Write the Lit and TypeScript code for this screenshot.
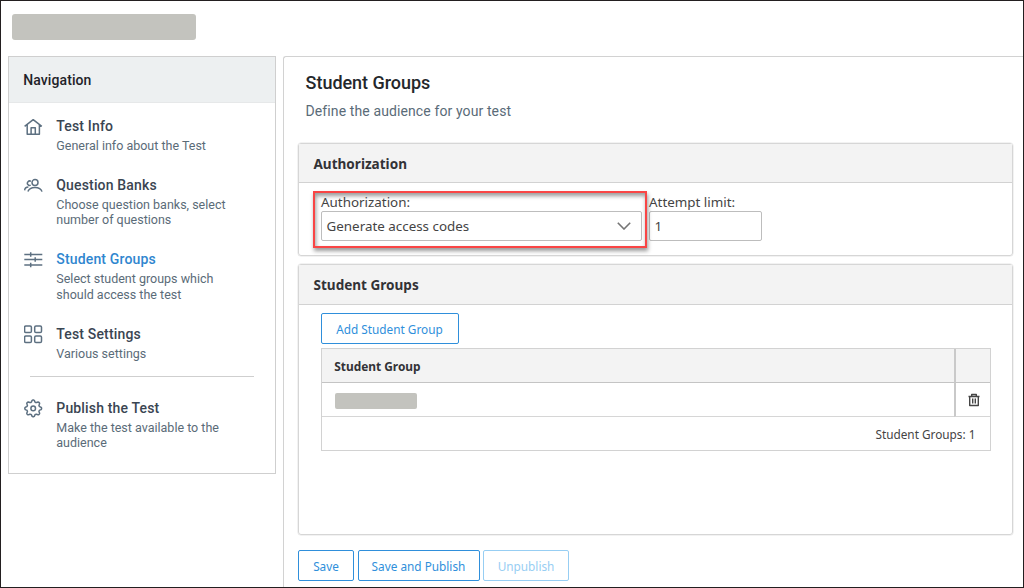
import { LitElement, html, css, svg, TemplateResult } from "lit";
import { customElement } from "lit/decorators.js";
import { classMap } from "lit/directives/class-map.js";

interface NavItem {
  icon: TemplateResult;
  title: string;
  lines: string[];
  active?: boolean;
  divided?: boolean;
}

// Outline of a cog with eight soft teeth, centred in a 19px box.
const cogOutline = (): string => {
  const pts: string[] = [];
  for (let i = 0; i < 96; i++) {
    const a = (i / 96) * Math.PI * 2;
    const r = 7.4 + Math.tanh(1.6 * Math.cos(8 * a)) * 1.05;
    pts.push(`${(9.2 + r * Math.cos(a)).toFixed(2)} ${(9.4 + r * Math.sin(a)).toFixed(2)}`);
  }
  return `M${pts.join("L")}Z`;
};

const icons = {
  home: svg`<path d="M.6 9.400 9.200 2.700 17.800 9.400M3.200 7.600v9.600h12.200V7.600M7.100 17.200v-6.400h4.200v6.400"/>`,
  people: svg`<circle cx="11" cy="6.600" r="3"/><path d="M3.900 15.600C4.900 12.500 7.600 11.400 11 11.400s6.100 1.100 7 4.200M6.900 5.400A2.200 2.200 0 1 0 6.700 9.100M.6 14.400C.8 12.200 2.100 11.100 4.400 11"/>`,
  sliders: svg`<path d="M.3 4.500h18M.3 9.500h18M.3 15h18M6.700 2.200v4.600M11.200 7.200v4.600M6.700 12.700v4.600"/>`,
  grid: svg`<rect x=".6" y=".9" width="6.800" height="6.600" rx="1.300"/><rect x="10.700" y=".9" width="6.800" height="6.600" rx="1.300"/><rect x=".6" y="10.900" width="6.800" height="6.600" rx="1.300"/><rect x="10.700" y="10.900" width="6.800" height="6.600" rx="1.300"/>`,
  gear: svg`<circle cx="9.200" cy="9.400" r="2.300"/><path d=${cogOutline()} />`,
};

const navItems: NavItem[] = [
  { icon: icons.home, title: "Test Info", lines: ["General info about the Test"] },
  { icon: icons.people, title: "Question Banks", lines: ["Choose question banks, select", "number of questions"] },
  { icon: icons.sliders, title: "Student Groups", lines: ["Select student groups which", "should access the test"], active: true },
  { icon: icons.grid, title: "Test Settings", lines: ["Various settings"] },
  { icon: icons.gear, title: "Publish the Test", lines: ["Make the test available to the", "audience"], divided: true },
];

@customElement("side-nav")
class SideNav extends LitElement {
  static styles = css`
    :host { display: block; box-sizing: border-box; width: 268px; height: 417.500px; border: 1px solid #cfcfcf; font-family: Roboto, sans-serif; }
    .head { height: 45px; line-height: 46px; padding-left: 14.300px; background: #edf0f1; color: #1f2329; font-size: 14px; font-weight: 500; letter-spacing: .08px; border-bottom: 1px solid #e6e8e9; }
    .list { padding-top: 12.900px; }
    .item { display: flex; padding-left: 15px; margin-bottom: 23px; }
    .icon { width: 19px; height: 19px; margin-top: 1px; fill: none; stroke: #5d7081; stroke-width: 1.500; stroke-linejoin: round; }
    .text { padding-left: 13.300px; }
    .title { height: 21px; line-height: 20px; font-size: 14px; font-weight: 500; letter-spacing: .160px; color: #3a4552; white-space: nowrap; }
    .line { height: 15.200px; line-height: 17px; font-size: 12.500px; color: #5a6b78; white-space: nowrap; }
    .title.active { color: #2f86cf; }
    .rule { width: 224px; height: 1px; background: #cfcfcf; margin: -7px 0 20.700px 21px; }
  `;
  render() {
    return html`
      <div class="head">Navigation</div>
      <div class="list">
        ${navItems.map(
          (n) => html`
            ${n.divided ? html`<div class="rule"></div>` : ""}
            <div class="item">
              <svg class="icon" viewBox="0 0 19 19">${n.icon}</svg>
              <div class="text">
                <div class=${classMap({ title: true, active: !!n.active })}>${n.title}</div>
                ${n.lines.map((l) => html`<div class="line">${l}</div>`)}
              </div>
            </div>`
        )}
      </div>`;
  }
}

@customElement("app-root")
class AppRoot extends LitElement {
  static styles = css`
    :host { display: block; font-family: "Noto Sans", sans-serif; color: #444; }
    * { box-sizing: border-box; }
    .page { width: 1024px; height: 588px; border: 1px solid #231f20; background: #fff; overflow: hidden; padding: 13px 0 0 7px; }
    .brand { width: 184px; height: 25.500px; margin-left: 4.400px; border-radius: 3px; background: #c3c3be; }
    .cols { display: flex; align-items: flex-start; gap: 7px; margin-top: 16.500px; }
    .main { flex: 1; height: 540px; border: 1px solid #d2d2d2; border-right: 0; border-radius: 3px 0 0 0; padding: 14px 9px 0 14px; }
    .h1 { font: 500 18px/24px Roboto, sans-serif; letter-spacing: -.040px; color: #24272b; padding-left: 7.600px; }
    .sub { font: 400 14px/20px Roboto, sans-serif; letter-spacing: .110px; color: #5a6b78; padding-left: 7.500px; margin-top: 6px; }
    .panel { border: 1px solid #d6d6d6; border-radius: 3px; box-shadow: 0 0 0 .500px #e6e6e6; width: 715px; }
    .auth { height: 113px; margin-top: 22px; }
    .groups { height: 271px; margin-top: 8px; }
    .phead { height: 39px; line-height: 40px; background: #f3f3f3; border-bottom: 1px solid #d2d2d2; padding-left: 14.500px; font-size: 13.550px; font-weight: 700; color: #323236; }
    .groups .phead { height: 40px; }
    .fields { display: flex; gap: 7px; padding: 11px 0 0 22px; position: relative; }
    .label { height: 17px; line-height: 17px; font-size: 13.400px; white-space: nowrap; }
    .input { height: 30px; border: 1px solid #bdbdbd; border-radius: 2px; background: #fff; font-size: 13.400px; line-height: 29px; padding: 0 10px 0 4.500px; display: flex; justify-content: space-between; align-items: center; }
    .select { width: 321px; }
    .limit { width: 113px; }
    .chev { width: 14px; height: 8px; margin-top: -1px; fill: none; stroke: #757575; stroke-width: 1.600; }
    .mark { position: absolute; left: 14px; top: 8px; width: 334px; height: 57px; border: 2px solid #f94545; box-shadow: 1px 3px 4px rgba(0,0,0,.4), inset 1px 3px 4px rgba(0,0,0,.4); }
    .btn { height: 31px; border: 1px solid #2f8fdb; border-radius: 2px; color: #2f8fdb; font-size: 11.800px; line-height: 30px; text-align: center; white-space: nowrap; }
    .actions .btn { line-height: 31px; }
    .add { width: 138px; margin: 8px 0 0 21.500px; }
    .table { display: grid; grid-template-columns: 1fr 36px; width: 670px; margin: 4px 0 0 22px; border: 1px solid #d2d2d2; }
    .th { height: 34px; line-height: 34px; background: #f3f3f3; border-bottom: 1px solid #c4c4c4; font-size: 11.900px; font-weight: 700; color: #323236; padding-left: 12.200px; }
    .td { height: 34px; border-bottom: 1px solid #d6d6d6; display: flex; align-items: center; padding-left: 13px; }
    .end { border-left: 2px solid #c9c9c9; padding-left: 11px; }
    .chip { width: 82px; height: 16px; border-radius: 2px; background: #c3c3be; margin-top: 3px; }
    .foot { grid-column: 1 / 3; height: 33px; line-height: 34px; text-align: right; padding-right: 14.500px; font-size: 11.800px; }
    .trash { width: 14px; height: 15px; margin-top: 2px; fill: none; stroke: #454545; stroke-width: 1.400; stroke-linejoin: round; }
    .actions { display: flex; gap: 3.500px; margin-top: 14.500px; }
    .save { width: 56px; }
    .publish { width: 122px; }
    .off { width: 86px; border-color: #97cef3; color: #97cef3; }
  `;
  render() {
    return html`
      <div class="page">
        <div class="brand"></div>
        <div class="cols">
          <side-nav></side-nav>
          <div class="main">
            <div class="h1">Student Groups</div>
            <div class="sub">Define the audience for your test</div>
            <div class="panel auth">
              <div class="phead">Authorization</div>
              <div class="fields">
                <div>
                  <div class="label">Authorization:</div>
                  <div class="input select">Generate access codes
                    <svg class="chev" viewBox="0 0 14 8"><path d="M.8.8 7 7 13.200.8"/></svg>
                  </div>
                </div>
                <div>
                  <div class="label">Attempt limit:</div>
                  <div class="input limit">1</div>
                </div>
                <div class="mark"></div>
              </div>
            </div>
            <div class="panel groups">
              <div class="phead">Student Groups</div>
              <div class="btn add">Add Student Group</div>
              <div class="table">
                <div class="th">Student Group</div><div class="th end"></div>
                <div class="td"><div class="chip"></div></div>
                <div class="td end">
                  <svg class="trash" viewBox="0 0 14 15"><path d="M1.500 3.500h11M4.700 3.500V1.500h4.600v2M2.700 3.500v9h8.600v-9M5.700 5.500v5M8.300 5.500v5"/></svg>
                </div>
                <div class="foot">Student Groups: 1</div>
              </div>
            </div>
            <div class="actions">
              <div class="btn save">Save</div>
              <div class="btn publish">Save and Publish</div>
              <div class="btn off">Unpublish</div>
            </div>
          </div>
        </div>
      </div>`;
  }
}
